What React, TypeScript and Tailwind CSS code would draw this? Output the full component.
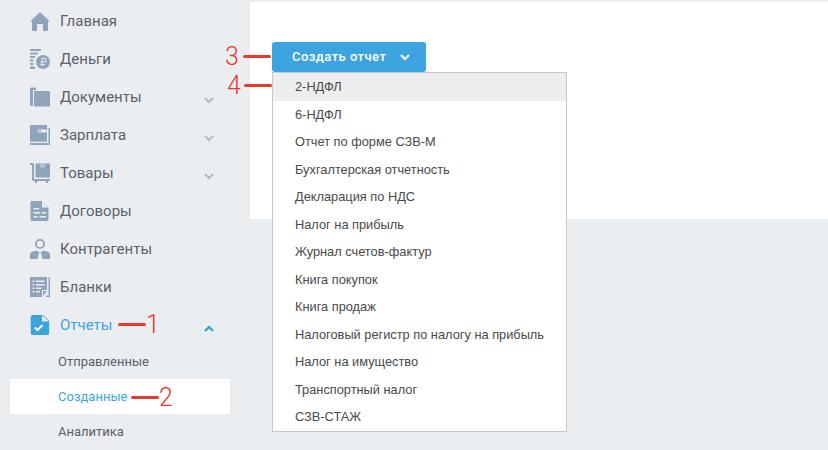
import React from "react";

const Ic = ({ children }: { children: React.ReactNode }) => (
  <svg width="20" height="20" viewBox="0 0 20 20" className="shrink-0" fill="#8fa3ba">{children}</svg>
);

const icons: Record<string, React.ReactNode> = {
  home: <Ic><path d="M10 1 L20 10.500 L18 10.500 L18 19 Q18 20 17 20 L13 20 L13 13 L7 13 L7 20 L3 20 Q2 20 2 19 L2 10.500 L0 10.500 Z" /></Ic>,
  money: <Ic><path d="M0 0h11v2H0zM0 3.500h8v2H0zM0 7h5v2H0zM0 10.500h3.500v2H0zM0 14h3.500v2H0zM0 17.500h5V20H0z" /><circle cx="13" cy="13" r="7" /><path d="M11.500 9h3a2 2 0 010 4.500h-2V15h2.500v1H12.500v1.500h-1V16h-1v-1h1v-1.500h-1v-1h1zm1 1v2.500h2a1.250 1.250 0 000-2.500z" fill="#ebeef1" /></Ic>,
  docs: <Ic><path d="M0 1.500q0-1 1-1h4l2 2.500h-4v16H1q-1 0-1-1z" /><path d="M4 4h15q1 0 1 1v13.500q0 1-1 1H4z" /></Ic>,
  salary: <Ic><path d="M1 0h15q1 0 1 1v2h3v16q0 1-1 1H1q-1 0-1-1V1q0-1 1-1z" /><path d="M8 4.500h8.500v3H8z" fill="#ebeef1" /><circle cx="10" cy="6" r="1" /><path d="M17 3.500h1.500V18H0v-1.200h17z" fill="#ebeef1" /></Ic>,
  goods: <Ic><path d="M0 0h3l1 1.500V16h16v2H3l-1-1V2.500L0 1.500z" /><path d="M5.500 0.500h14.500V14.500H5.500z" /><path d="M10 0.500h5v4h-5z" fill="#b4c2d2" /><circle cx="6" cy="19" r="1.200" /><circle cx="17" cy="19" r="1.200" /></Ic>,
  contracts: <Ic><path d="M1.500 0h10.500l6.500 6.500V18.500q0 1.500-1.500 1.500H2q-1.500 0-1.500-1.500V1.500q0-1.500 1-1.500z" /><path d="M12 0v6.500h6.500z" fill="#ebeef1" /><path d="M3.500 7h5.500v1.500H3.500zM3.500 11h7v1.500h-7zM12 11h4v1.500h-4zM3.500 15h4v1.500h-4zM9.500 15h6.500v1.500H9.500z" fill="#ebeef1" /></Ic>,
  people: <Ic><path d="M10 0a5 5 0 110 10 5 5 0 010-10zm0 1.800a3.200 3.200 0 100 6.400 3.200 3.200 0 000-6.400z" /><path d="M6 11.500l-4.500 1.500Q0 13.800 0 15.500V20h7.500L9 13.500h2L12.500 20H20v-4.500q0-1.700-1.500-2.500L14 11.500 11 13H9z" /></Ic>,
  blanks: <Ic><path d="M0 0h17v13h-5v7H0z" /><path d="M13 14h4l-4 5zM18.500 0H20v20h-5l1.500-1.500h2z" /><path d="M2.500 3.500h2v1.500h-2zM6 3.500h8.500v1.500H6zM2.500 7h2v1.500h-2zM6 7h8.500v1.500H6zM2.500 10.500h2V12h-2zM6 10.500h5.500V12H6zM2.500 14h2v1.500h-2zM6 14h4v1.500H6z" fill="#ebeef1" /></Ic>,
  reports: (
    <svg width="20" height="20" viewBox="0 0 20 20" className="shrink-0">
      <path d="M2 0h10.500L18.500 6V18q0 2-2 2H2q-2 0-2-2V2q0-2 2-2z" fill="#3da4e0" transform="translate(.7 0)" />
      <path d="M12 0v6.500h7z" fill="#ebeef1" />
      <path d="M5 12.500l2.500 2.500 5-5" fill="none" stroke="#fff" strokeWidth="2" />
    </svg>
  ),
};

const Chevron = ({ up, color }: { up?: boolean; color: string }) => (
  <svg width="10" height="7" viewBox="0 0 10 7" className="shrink-0" fill="none" stroke={color} strokeWidth="2">
    <path d={up ? "M1 6l4-4 4 4" : "M1 1l4 4 4-4"} />
  </svg>
);

const items: [string, string, boolean][] = [
  ["home", "Главная", false],
  ["money", "Деньги", false],
  ["docs", "Документы", true],
  ["salary", "Зарплата", true],
  ["goods", "Товары", true],
  ["contracts", "Договоры", false],
  ["people", "Контрагенты", false],
  ["blanks", "Бланки", false],
];

const menu = [
  "2-НДФЛ",
  "6-НДФЛ",
  "Отчет по форме СЗВ-М",
  "Бухгалтерская отчетность",
  "Декларация по НДС",
  "Налог на прибыль",
  "Журнал счетов-фактур",
  "Книга покупок",
  "Книга продаж",
  "Налоговый регистр по налогу на прибыль",
  "Налог на имущество",
  "Транспортный налог",
  "СЗВ-СТАЖ",
];

const Note = ({ n, className, numLeft }: { n: string; className: string; numLeft: boolean }) => (
  <div className={`absolute flex items-center text-[25px] font-light leading-none text-[#e8392e] ${className}`}>
    {numLeft && <span>{n}</span>}
    <span className="block h-[3px] w-[28px] rounded-sm bg-[#e8392e]" />
    {!numLeft && <span>{n}</span>}
  </div>
);

export default function App() {
  return (
    <div className="relative flex h-[450px] w-[828px] overflow-hidden bg-[#ebeef1] font-['Roboto',sans-serif]">
      <aside className="w-[250px] shrink-0 pt-[2px]">
        {items.map(([ic, label, chev]) => (
          <div key={label} className="flex h-[38px] items-center pl-[30px] pr-[36px]">
            {icons[ic]}
            <span className="ml-[10px] flex-1 text-[15px] text-[#5b6168]">{label}</span>
            {chev && <span className="mt-[6px]"><Chevron color="#b5bcc3" /></span>}
          </div>
        ))}
        <div className="flex h-[38px] items-center pl-[30px] pr-[36px]">
          {icons.reports}
          <span className="ml-[10px] flex-1 text-[15px] text-[#3da4e0]">Отчеты</span>
          <span className="mt-[6px]"><Chevron up color="#2a9fd0" /></span>
        </div>
        <div className="flex flex-col pl-[10px] pr-[20px] text-[13px]">
          <div className="flex h-[35px] items-center pl-[48px] pt-[1px] text-[#5b6168]">Отправленные</div>
          <div className="flex h-[35px] items-center bg-white pl-[48px] pt-[1px] text-[#3da4e0]">Созданные</div>
          <div className="flex h-[35px] items-center pl-[48px] pt-[1px] text-[#5b6168]">Аналитика</div>
        </div>
      </aside>

      <main className="flex-1 pt-[2px]">
        <div className="h-[217px] bg-white pl-[22px] pt-[40px]">
          <button className="flex h-[30px] w-[154px] items-center rounded-[3px] bg-[#3da4e0] pl-[20px] text-[13px] font-medium tracking-[0.45px] text-white">
            Создать отчет
            <span className="ml-[14px]"><Chevron color="#fff" /></span>
          </button>
        </div>
      </main>

      <ul className="absolute left-[272px] top-[72px] w-[295px] border border-[#c8c8c8] bg-white font-['Liberation_Sans',sans-serif] text-[12.8px] text-[#4a4a4a]">
        {menu.map((m, i) => (
          <li key={m} className={`flex h-[27.5px] items-center pl-[22px] ${i === 0 ? "bg-[#eeeeee]" : ""}`}>{m}</li>
        ))}
      </ul>

      <Note n="3" numLeft className="left-[225px] top-[44px] gap-[4px]" />
      <Note n="4" numLeft className="left-[227px] top-[73px] gap-[3px]" />
      <Note n="1" numLeft={false} className="left-[118px] top-[312px] gap-[0px]" />
      <Note n="2" numLeft={false} className="left-[131px] top-[385px] gap-[0px]" />
    </div>
  );
}
